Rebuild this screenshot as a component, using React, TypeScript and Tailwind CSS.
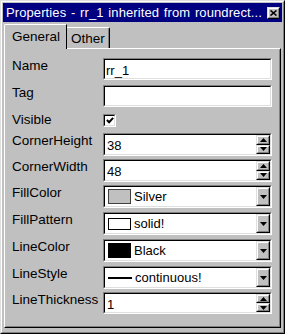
import React from "react";

const font = { fontFamily: '"Liberation Sans", Arial, sans-serif' };

function Sunken({ children, className = "" }: { children?: React.ReactNode; className?: string }) {
  return (
    <div className={"border border-t-[#808080] border-l-[#808080] border-b-white border-r-white " + className}>
      <div className="h-full border border-t-[#000] border-l-[#000] border-b-[#dfdfdf] border-r-[#dfdfdf] bg-white flex items-center">
        {children}
      </div>
    </div>
  );
}

function Raised({ children, className = "" }: { children?: React.ReactNode; className?: string }) {
  return (
    <div className={"border border-t-[#dfdfdf] border-l-[#dfdfdf] border-b-black border-r-black bg-[#c0c0c0] " + className}>
      <div className="h-full w-full border border-t-white border-l-white border-b-[#808080] border-r-[#808080] flex items-center justify-center">
        {children}
      </div>
    </div>
  );
}

function Spinner() {
  return (
    <div className="flex flex-col h-full w-[14px] shrink-0">
      <Raised className="h-1/2">
        <svg width="7" height="4" viewBox="0 0 7 4"><path d="M3.5 0 L7 4 L0 4 Z" fill="#000" /></svg>
      </Raised>
      <Raised className="h-1/2">
        <svg width="7" height="4" viewBox="0 0 7 4"><path d="M0 0 L7 0 L3.5 4 Z" fill="#000" /></svg>
      </Raised>
    </div>
  );
}

function DropBtn() {
  return (
    <Raised className="h-full w-[14px] shrink-0">
      <svg width="7" height="4" viewBox="0 0 7 4"><path d="M0 0 L7 0 L3.5 4 Z" fill="#000" /></svg>
    </Raised>
  );
}

function Row({ label, h, children }: { label: string; h: string; children?: React.ReactNode }) {
  return (
    <div className={"flex " + h}>
      <div className="w-[91px] text-[13.5px] leading-[15px] text-black whitespace-nowrap">{label}</div>
      {children}
    </div>
  );
}

export default function App() {
  return (
    <div className="w-[285px] h-[334px] bg-[#c0c0c0] border border-t-[#dfdfdf] border-l-[#dfdfdf] border-b-black border-r-black" style={font}>
      <div className="h-full border border-t-white border-l-white border-b-[#808080] border-r-[#808080] flex flex-col px-[1px] pt-[1px]">
        {/* title bar */}
        <div className="h-[19px] bg-[#000080] flex items-center pl-[3px] pr-[2px] shrink-0">
          <span className="text-white text-[13px] leading-[15px] whitespace-nowrap flex-1 tracking-[0.1px] [word-spacing:1px]">
            Properties - rr_1 inherited from roundrect...
          </span>
          <Raised className="w-[13px] h-[12px]">
            <svg width="7" height="6" viewBox="0 0 7 6"><path d="M0.5 0.5 L6.5 5.5 M6.5 0.5 L0.5 5.5" stroke="#000" strokeWidth="1.6" /></svg>
          </Raised>
        </div>
        {/* tabs */}
        <div className="flex h-[25px] items-end pl-[1px] mt-[1px]">
          <div className="relative z-10 h-[25px] w-[63px] border-t border-l border-t-white border-l-white border-r border-r-black bg-[#c0c0c0] text-[13.5px] leading-[15px] text-black pl-[7px] pt-[4px] mb-[-1px] rounded-tl-[2px]">
            General
          </div>
          <div className="h-[21px] w-[43px] border-t border-t-white border-r border-r-black bg-[#c0c0c0] text-[13.5px] leading-[15px] text-black pl-[4px] pt-[3px] rounded-tr-[2px] shadow-[inset_-1px_0_0_#808080]">
            Other
          </div>
        </div>
        {/* panel */}
        <div className="flex-1 ml-[1px] mr-[1px] mb-[4px] border border-t-white border-l-white border-b-black border-r-black">
          <div className="h-full border border-t-transparent border-l-transparent border-b-[#808080] border-r-[#808080] pl-[6px] pr-[4px] pt-[8px] flex flex-col">
            <Row label="Name" h="h-[27px]">
              <Sunken className="w-[169px] h-[22px]">
                <span className="text-[13px] leading-[15px] pl-[1px] pt-[3px]">rr_1</span>
              </Sunken>
            </Row>
            <Row label="Tag" h="h-[27px]">
              <Sunken className="w-[169px] h-[22px]" />
            </Row>
            <Row label="Visible" h="h-[21px]">
              <div className="mt-[2px] w-[13px] h-[13px]">
                <Sunken className="w-[13px] h-[13px]">
                  <svg width="9" height="9" viewBox="0 0 9 9" className="ml-[1px]"><path d="M1 4 L3.5 6.5 L8 1.5" stroke="#000" strokeWidth="2.2" fill="none" /></svg>
                </Sunken>
              </div>
            </Row>
            <Row label="CornerHeight" h="h-[26px]">
              <Sunken className="w-[169px] h-[23px]">
                <span className="flex-1 text-[13px] leading-[15px] pl-[2px] pt-[1px]">38</span>
                <Spinner />
              </Sunken>
            </Row>
            <Row label="CornerWidth" h="h-[26px]">
              <Sunken className="w-[169px] h-[23px]">
                <span className="flex-1 text-[13px] leading-[15px] pl-[2px] pt-[1px]">48</span>
                <Spinner />
              </Sunken>
            </Row>
            <Row label="FillColor" h="h-[27px]">
              <Sunken className="w-[169px] h-[23px]">
                <div className="flex-1 flex items-center pl-[3px]">
                  <div className="w-[23px] h-[15px] border border-[#404040] bg-[#c0c0c0]" />
                  <span className="text-[13px] leading-[15px] pl-[3px]">Silver</span>
                </div>
                <DropBtn />
              </Sunken>
            </Row>
            <Row label="FillPattern" h="h-[27px]">
              <Sunken className="w-[169px] h-[23px]">
                <div className="flex-1 flex items-center pl-[3px]">
                  <div className="w-[23px] h-[12px] border border-[#000] bg-white" />
                  <span className="text-[13px] leading-[15px] pl-[3px]">solid!</span>
                </div>
                <DropBtn />
              </Sunken>
            </Row>
            <Row label="LineColor" h="h-[27px]">
              <Sunken className="w-[169px] h-[23px]">
                <div className="flex-1 flex items-center pl-[3px]">
                  <div className="w-[23px] h-[15px] bg-black" />
                  <span className="text-[13px] leading-[15px] pl-[3px]">Black</span>
                </div>
                <DropBtn />
              </Sunken>
            </Row>
            <Row label="LineStyle" h="h-[26px]">
              <Sunken className="w-[169px] h-[23px]">
                <div className="flex-1 flex items-center pl-[3px]">
                  <div className="w-[24px] h-[2px] bg-black" />
                  <span className="text-[13px] leading-[15px] pl-[3px]">continuous!</span>
                </div>
                <DropBtn />
              </Sunken>
            </Row>
            <Row label="LineThickness" h="h-[24px]">
              <Sunken className="w-[169px] h-[22px]">
                <span className="flex-1 text-[13px] leading-[15px] pl-[2px] pt-[2px]">1</span>
                <Spinner />
              </Sunken>
            </Row>
          </div>
        </div>
      </div>
    </div>
  );
}
